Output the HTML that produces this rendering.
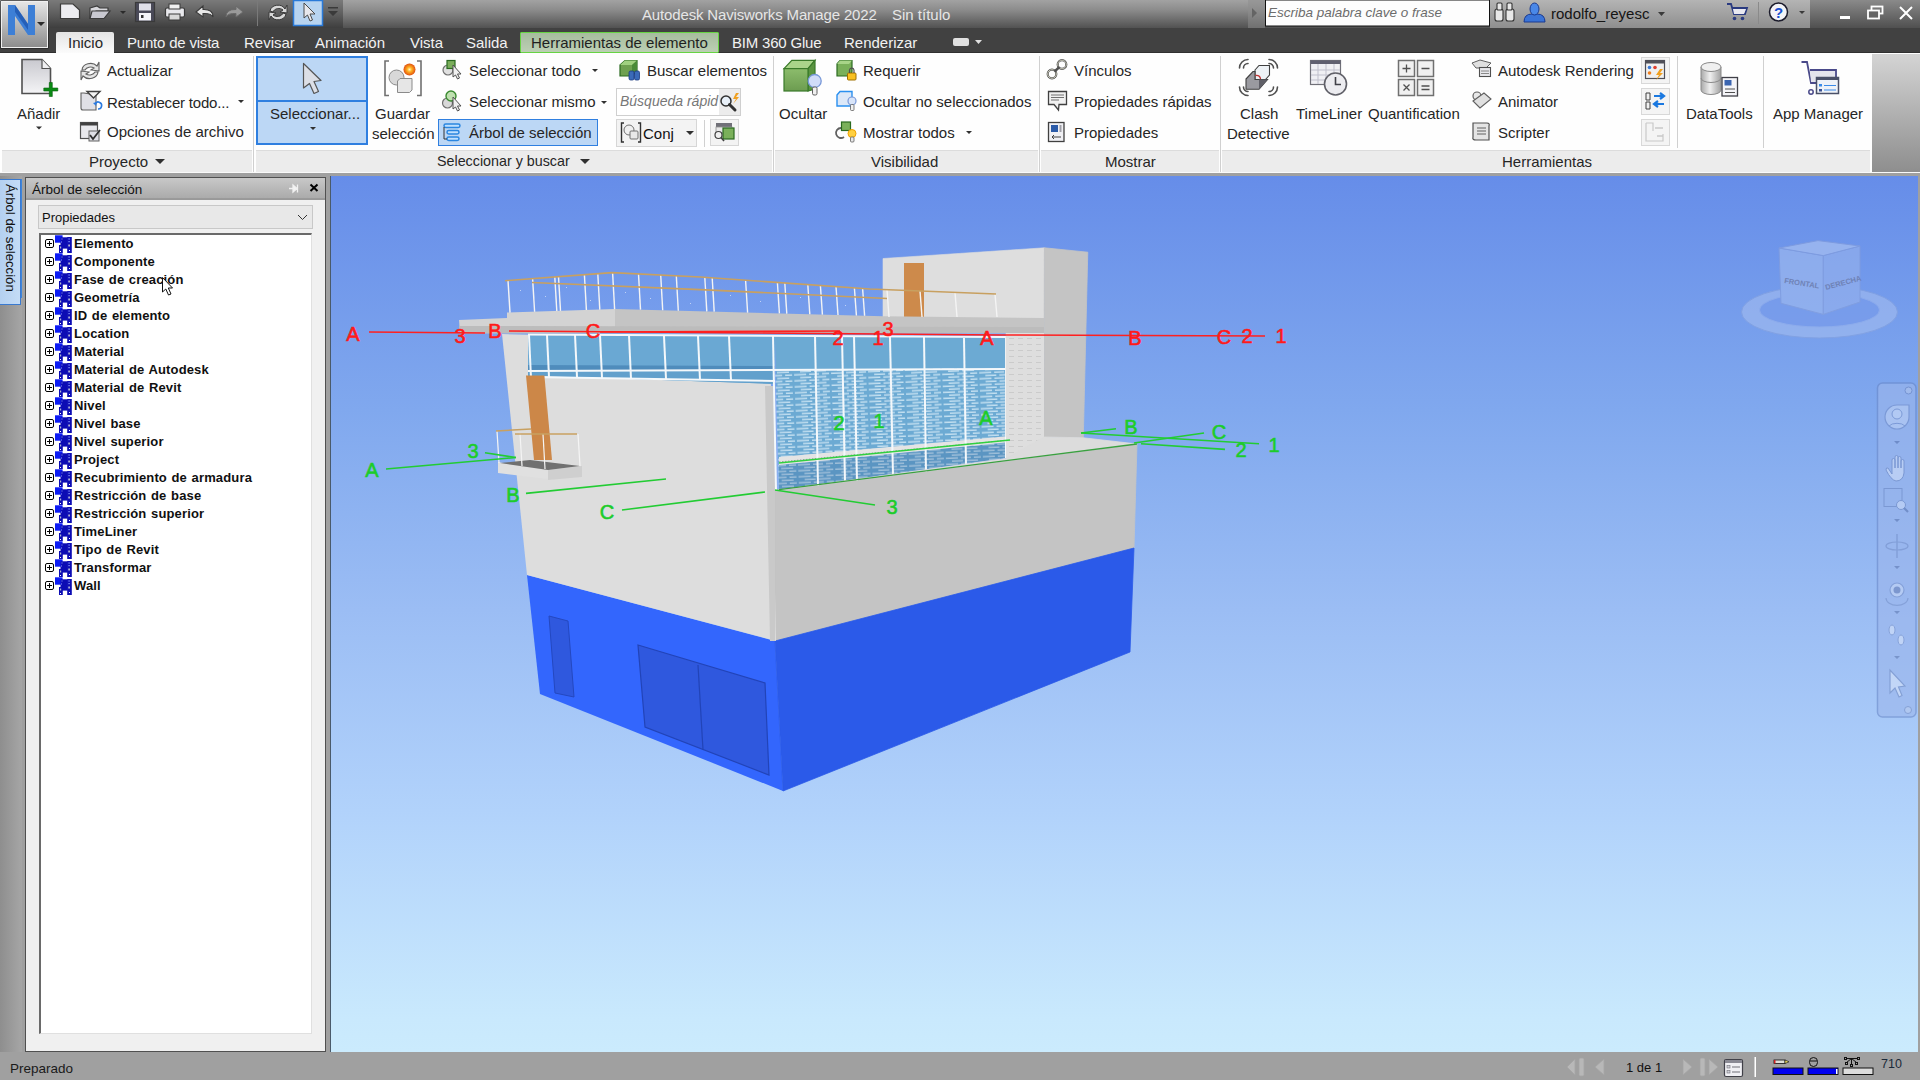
<!DOCTYPE html>
<html><head><meta charset="utf-8">
<style>
*{box-sizing:border-box;margin:0;padding:0}
html,body{width:1920px;height:1080px;overflow:hidden;background:#a0a0a0;font-family:"Liberation Sans",sans-serif;position:relative}
.a{position:absolute}
.t{position:absolute;white-space:nowrap;font-size:15px;line-height:15px;color:#262626}
.tw{position:absolute;white-space:nowrap;font-size:15px;line-height:15px;color:#f2f2f2}
svg{position:absolute;overflow:visible}
#title{left:0;top:0;width:1920px;height:28px;background:linear-gradient(#a2a2a2,#8c8c8c 35%,#525252 100%)}
#tabs{left:0;top:28px;width:1920px;height:25px;background:#414141;border-bottom:1px solid #303030}
#ribbon{left:0;top:53px;width:1920px;height:119px;background:#fefefe}
.lbl{position:absolute;top:150px;height:22px;background:#ececec;border-top:1px solid #dcdcdc}
.psep{position:absolute;top:56px;width:1px;height:116px;background:#d0d0d0}
#vp{left:331px;top:176px;width:1589px;height:876px;background:linear-gradient(#668de9 0%,#80a8ee 26.7%,#9bbdf4 49.5%,#b1d2fb 72.4%,#c9e9fd 96.3%,#cbebfd 100%)}
.tree{font-weight:bold;font-size:13px;line-height:13px;color:#101010;letter-spacing:0.15px;word-spacing:0.8px}
</style></head><body>

<!-- TITLE BAR -->
<div id="title" class="a"></div>
<div id="tabs" class="a"></div>
<div id="ribbon" class="a"></div>


<!-- Title text -->
<div class="tw" style="left:642px;top:7px;font-size:15px;color:#e6e6e6;letter-spacing:-0.15px">Autodesk Navisworks Manage 2022</div>
<div class="tw" style="left:892px;top:7px;color:#e6e6e6">Sin título</div>

<!-- Tabs -->
<div class="a" style="left:56px;top:32px;width:58px;height:21px;background:linear-gradient(#e4e4e4,#fbfbfb);border-radius:2px 2px 0 0"></div>
<div class="t" style="left:68px;top:35px">Inicio</div>
<div class="tw" style="left:127px;top:35px;letter-spacing:-0.2px">Punto de vista</div>
<div class="tw" style="left:244px;top:35px">Revisar</div>
<div class="tw" style="left:315px;top:35px">Animación</div>
<div class="tw" style="left:410px;top:35px">Vista</div>
<div class="tw" style="left:466px;top:35px">Salida</div>
<div class="a" style="left:519.5px;top:31.5px;width:199.5px;height:21px;background:linear-gradient(#a6bd9e,#bccfb4);border:1.5px solid #66d442;border-radius:1px"></div>
<div class="t" style="left:531px;top:35px;color:#1f1f1f">Herramientas de elemento</div>
<div class="tw" style="left:732px;top:35px;letter-spacing:-0.2px">BIM 360 Glue</div>
<div class="tw" style="left:844px;top:35px">Renderizar</div>

<!-- Ribbon panels -->
<div class="lbl" style="left:2px;width:250px"></div>
<div class="lbl" style="left:256px;width:516px"></div>
<div class="lbl" style="left:775px;width:263px"></div>
<div class="lbl" style="left:1041px;width:178px"></div>
<div class="lbl" style="left:1222px;width:648px"></div>
<div class="psep" style="left:253px"></div>
<div class="psep" style="left:773px"></div>
<div class="psep" style="left:1039px"></div>
<div class="psep" style="left:1220px"></div>
<div class="a" style="left:1872px;top:54px;width:48px;height:118px;background:linear-gradient(#d4d4d4,#8e8e8e)"></div>

<div class="t" style="left:89px;top:153.5px">Proyecto</div>
<div class="t" style="left:437px;top:153.5px;font-size:14.3px">Seleccionar y buscar</div>
<div class="t" style="left:871px;top:153.5px">Visibilidad</div>
<div class="t" style="left:1105px;top:153.5px">Mostrar</div>
<div class="t" style="left:1502px;top:153.5px">Herramientas</div>

<!-- Proyecto -->
<div class="t" style="left:17px;top:106px">Añadir</div>
<div class="t" style="left:107px;top:63px">Actualizar</div>
<div class="t" style="left:107px;top:95px;letter-spacing:-0.2px">Restablecer todo...</div>
<div class="t" style="left:107px;top:124px">Opciones de archivo</div>

<!-- Seleccionar y buscar -->
<div class="a" style="left:256px;top:56px;width:112px;height:89px;background:#bcd7f5;border:2px solid #2f7fe0"></div>
<div class="a" style="left:256px;top:100px;width:112px;height:2px;background:#2f7fe0"></div>
<div class="t" style="left:270px;top:106px">Seleccionar...</div>
<div class="t" style="left:375px;top:106px">Guardar</div>
<div class="t" style="left:372px;top:126px">selección</div>
<div class="t" style="left:469px;top:63px">Seleccionar todo</div>
<div class="t" style="left:469px;top:94px">Seleccionar mismo</div>
<div class="a" style="left:438px;top:119px;width:160px;height:27px;background:#bcd7f5;border:1px solid #2f7fe0"></div>
<div class="t" style="left:469px;top:125px">Árbol de selección</div>
<div class="t" style="left:647px;top:63px">Buscar elementos</div>
<div class="a" style="left:616px;top:88px;width:125px;height:28px;background:#fff;border:1px solid #cfcfcf"></div>
<div class="t" style="left:620px;top:94px;font-style:italic;color:#777;font-size:14px">Búsqueda rápid</div>
<div class="a" style="left:616px;top:119px;width:81px;height:28px;background:#f3f3f3;border:1px solid #d6d6d6"></div>
<div class="t" style="left:643px;top:126px;color:#111">Conj</div>
<div class="a" style="left:710px;top:119px;width:29px;height:27px;background:#f3f3f3;border:1px solid #d6d6d6"></div>

<!-- Visibilidad -->
<div class="t" style="left:779px;top:106px">Ocultar</div>
<div class="t" style="left:863px;top:63px">Requerir</div>
<div class="t" style="left:863px;top:94px">Ocultar no seleccionados</div>
<div class="t" style="left:863px;top:125px">Mostrar todos</div>

<!-- Mostrar -->
<div class="t" style="left:1074px;top:63px">Vínculos</div>
<div class="t" style="left:1074px;top:94px">Propiedades rápidas</div>
<div class="t" style="left:1074px;top:125px">Propiedades</div>

<!-- Herramientas -->
<div class="t" style="left:1240px;top:106px">Clash</div>
<div class="t" style="left:1227px;top:126px">Detective</div>
<div class="t" style="left:1296px;top:106px">TimeLiner</div>
<div class="t" style="left:1368px;top:106px">Quantification</div>
<div class="t" style="left:1498px;top:63px">Autodesk Rendering</div>
<div class="t" style="left:1498px;top:94px">Animator</div>
<div class="t" style="left:1498px;top:125px">Scripter</div>
<div class="psep" style="left:1677px;height:92px"></div>
<div class="psep" style="left:1763px;height:92px"></div>
<div class="t" style="left:1686px;top:106px">DataTools</div>
<div class="t" style="left:1773px;top:106px">App Manager</div>

<!--ICONS1-->
<svg style="left:0;top:0" width="1920" height="176" viewBox="0 0 1920 176">
<defs>
<linearGradient id="gDoc" x1="0" y1="0" x2="0" y2="1"><stop offset="0" stop-color="#c9c9cf"/><stop offset="1" stop-color="#f4f4f6"/></linearGradient>
<linearGradient id="gN" x1="0" y1="0" x2="0" y2="1"><stop offset="0" stop-color="#e6e6e6"/><stop offset="1" stop-color="#8c8c8c"/></linearGradient>
<linearGradient id="gCubeF" x1="0" y1="0" x2="0" y2="1"><stop offset="0" stop-color="#8cbc6c"/><stop offset="1" stop-color="#6c9c50"/></linearGradient>
<radialGradient id="gBurst"><stop offset="0" stop-color="#fff8c0"/><stop offset="0.4" stop-color="#ffb020"/><stop offset="1" stop-color="#e05010"/></radialGradient>
<linearGradient id="gDB" x1="0" y1="0" x2="1" y2="0"><stop offset="0" stop-color="#a8a8a8"/><stop offset="0.45" stop-color="#f0f0f0"/><stop offset="1" stop-color="#a0a0a0"/></linearGradient>
</defs>
<!-- QAT dark band -->
<linearGradient id="gQat" x1="0" y1="0" x2="0" y2="1"><stop offset="0" stop-color="#7a7a7a"/><stop offset="0.5" stop-color="#5e5e5e"/><stop offset="1" stop-color="#3e3e3e"/></linearGradient>
<linearGradient id="gCtl" x1="0" y1="0" x2="0" y2="1"><stop offset="0" stop-color="#8a8a8a"/><stop offset="1" stop-color="#505050"/></linearGradient>
<linearGradient id="gUsr" x1="0" y1="0" x2="0" y2="1"><stop offset="0" stop-color="#b4b4b4"/><stop offset="1" stop-color="#8e8e8e"/></linearGradient>
<rect x="49" y="0" width="294" height="28" fill="url(#gQat)"/>
<rect x="1490" y="0" width="320" height="28" fill="url(#gUsr)"/>
<rect x="1810" y="0" width="110" height="28" fill="url(#gCtl)"/>
<!-- App button N -->
<rect x="0.5" y="0.5" width="48" height="48" fill="#1a1a1a"/>
<rect x="1.5" y="1.5" width="46" height="46" fill="url(#gN)" stroke="#f0f0f0" stroke-width="1"/>
<path d="M8,35 L8,5 L15,5 L28,24 L28,5 L35,5 L35,35 L28,35 L15,16 L15,35 Z" fill="#3d7fd6"/>
<path d="M15,5 L28,24 L28,30 L15,12 Z" fill="#1f58b0" opacity="0.8"/>
<path d="M37,22 L45,22 L41,26 Z" fill="#2a2a2a"/>
<!-- QAT icons -->
<g stroke="#3a3a3a" stroke-width="1.2">
<path d="M60.5,4 L73,4 L79.5,10 L79.5,18.5 L60.5,18.5 Z" fill="#ececf0"/>
<path d="M90,8 L97,6 L100,8 L108,8 L108,11 L96,11 L91,18 L90,18 Z" fill="#d8d8dc"/>
<path d="M92,11 L110,11 L104,18.5 L90,18.5 Z" fill="#c8c8d0"/>
<rect x="135.5" y="2.5" width="19" height="19" fill="#4a4a58"/>
<rect x="165.5" y="8" width="19" height="9" rx="1.5" fill="#e8e8ec"/>
</g>
<path d="M120,11 L126,11 L123,14 Z" fill="#2a2a2a"/>
<rect x="139" y="3.5" width="12" height="7" fill="#e0e0e8"/><rect x="139" y="13" width="12" height="7.5" fill="#f4f4f8"/><rect x="141" y="15" width="2.5" height="3" fill="#333"/>
<rect x="169" y="4" width="11" height="5" fill="#f0f0f0" stroke="#3a3a3a" stroke-width="1"/><rect x="169" y="14" width="11" height="6" fill="#d8d8d8" stroke="#3a3a3a" stroke-width="1"/>
<path d="M196,12 L203,6 L203,9.5 Q213,9 213,17 Q211,13 203,13.5 L203,17 Z" fill="#e8e8e8" stroke="#3a3a3a" stroke-width="1.1"/>
<path d="M243,12 L236,6 L236,9.5 Q226,9 226,17 Q228,13 236,13.5 L236,17 Z" fill="#9a9a9a" stroke="#6a6a6a" stroke-width="1"/>
<rect x="257" y="0" width="1" height="26" fill="#7a7a7a"/>
<path d="M270,11 A8,7 0 0 1 285,9 L287,5 L287,13 L280,12 L283,10 A6,5 0 0 0 273,12 Z M286,14 A8,7 0 0 1 271,16 L269,20 L269,12 L276,13 L273,15 A6,5 0 0 0 283,13 Z" fill="#d8d8d8" stroke="#3a3a3a" stroke-width="1"/>
<rect x="293.5" y="0.5" width="29" height="25" fill="#b8d4f0" stroke="#2a7ad8" stroke-width="1.5"/>
<path d="M304,3 L304,18 L307.5,15 L310,21 L312.5,20 L310,14 L315,14 Z" fill="#e8e8ec" stroke="#4a4a4a" stroke-width="1"/>
<path d="M328,7 L338,7 L338,8.5 L328,8.5 Z M328,11 L338,11 L333,16 Z" fill="#3a3a3a"/>
<!-- title right arrow -->
<path d="M1252,8 L1257,13 L1252,18 Z" fill="#3a3a3a"/>
<rect x="1248" y="0" width="17" height="28" fill="#8e8e8e" opacity="0.5"/>
<!-- search box -->
<rect x="1265.5" y="0" width="224" height="26" fill="#fdfdfd" stroke="#111" stroke-width="1"/>
<!-- binoculars -->
<g fill="#e8e8e8" stroke="#333" stroke-width="1.1">
<rect x="1495" y="9" width="8" height="12" rx="2"/><rect x="1506" y="9" width="8" height="12" rx="2"/>
<rect x="1497" y="3" width="5" height="7" rx="1"/><rect x="1507" y="3" width="5" height="7" rx="1"/>
</g>
<!-- user -->
<path d="M1524,22 Q1524,14 1532,14 L1537,14 Q1545,14 1545,22 Z" fill="#3a74d8" stroke="#1a3a90" stroke-width="1"/>
<ellipse cx="1534.5" cy="9" rx="4.5" ry="6" fill="#4a88e8" stroke="#1a3a90" stroke-width="1"/>
<path d="M1658,12 L1665,12 L1661.5,16 Z" fill="#3a3a3a"/>
<!-- cart -->
<path d="M1727,4 L1731,4 L1734,14 L1745,14 L1747,8 L1732,8" fill="none" stroke="#2a3a80" stroke-width="1.8"/>
<path d="M1733,9 L1746,9 L1744,14 L1734,14 Z" fill="#e8e8f0"/>
<circle cx="1734.5" cy="18.5" r="1.8" fill="#2a3a80"/><circle cx="1742.5" cy="18.5" r="1.8" fill="#2a3a80"/>
<rect x="1758" y="2" width="1" height="22" fill="#8a8a8a"/>
<circle cx="1778.5" cy="12" r="9" fill="#f4f4f8" stroke="#1a1a2a" stroke-width="1.5"/>
<text x="1778.5" y="17.5" font-family="Liberation Sans" font-size="15" font-weight="bold" fill="#1a50d0" text-anchor="middle">?</text>
<path d="M1799,11 L1805,11 L1802,14 Z" fill="#3a3a3a"/>
<!-- window controls -->
<rect x="1840" y="16" width="10" height="3" fill="#fff"/>
<rect x="1871.5" y="6.5" width="11" height="7" fill="none" stroke="#fff" stroke-width="1.8"/>
<rect x="1868" y="10.5" width="11" height="8" fill="#666" stroke="#fff" stroke-width="1.8"/>
<path d="M1900,7 L1912,19 M1912,7 L1900,19" stroke="#fff" stroke-width="2"/>
<!-- tab row extra icon -->
<rect x="953" y="38" width="16" height="8" rx="2" fill="#e0e0e0"/><path d="M975,40 L982,40 L978.5,44 Z" fill="#e0e0e0"/>

<!-- ========== RIBBON ========== -->
<!-- Añadir -->
<path d="M22,59.5 L42,59.5 L50.5,68.5 L50.5,93.5 L22,93.5 Z" fill="url(#gDoc)" stroke="#505050" stroke-width="1.6"/>
<path d="M42,59.5 L42,68.5 L50.5,68.5" fill="#f0f0f2" stroke="#505050" stroke-width="1.2"/>
<path d="M49.3,82.5 h3 v5.5 h5.5 v3 h-5.5 v5.5 h-3 v-5.5 h-5.5 v-3 h5.5 Z" fill="#0a8a14" stroke="#06600c" stroke-width="0.6"/>
<path d="M36,126.5 L42,126.5 L39,129.5 Z" fill="#303030"/>
<!-- Actualizar -->
<path d="M82,70 A8.5,7 0 0 1 97,66 L99,62 L99,71 L91,70 L94,68 A6,5 0 0 0 85,70 Z M98,72 A8.5,7 0 0 1 83,76 L81,80 L81,71 L89,72 L86,74 A6,5 0 0 0 95,72 Z" fill="#e4e4e4" stroke="#606060" stroke-width="1.1"/>
<!-- Restablecer -->
<path d="M81,93 L81,108 Q81,110 83,110 L96,110 L96,95 L84,93 Z" fill="#e0e0e6" stroke="#606060" stroke-width="1.1"/>
<path d="M87,91.5 L100,91.5 L93.5,98 Z" fill="#f4f4f4" stroke="#404040" stroke-width="1.4"/>
<path d="M95,104 A3.5,3.5 0 1 1 98,109" fill="none" stroke="#2a7ae0" stroke-width="1.6"/><path d="M93,103 L97,102 L96,106 Z" fill="#2a7ae0"/>
<!-- Opciones -->
<rect x="80.5" y="122.5" width="17" height="16" fill="#e8e8ec" stroke="#505050" stroke-width="1.2"/>
<rect x="80.5" y="122.5" width="17" height="3" fill="#404040"/>
<rect x="89" y="131" width="10" height="10" fill="#e0e0e6" stroke="#606060" stroke-width="1"/>
<path d="M90,135 L93,139 L100,130" fill="none" stroke="#303030" stroke-width="1.8"/>
<path d="M238,100 L244,100 L241,103 Z" fill="#303030"/>
<path d="M155,159 L165,159 L160,164 Z" fill="#303030"/>
<!-- Seleccionar cursor -->
<path d="M303.5,63.5 L303.5,88 L309.5,83.5 L314,93.5 L318.5,91.5 L314,81.5 L321,80.5 Z" fill="#dcdfe6" stroke="#555" stroke-width="1.2" stroke-linejoin="round"/>
<path d="M310,127 L316,127 L313,130 Z" fill="#303030"/>
<!-- Guardar seleccion -->
<path d="M389,61 L385,61 L385,95.5 L389,95.5 M417,61 L421,61 L421,95.5 L417,95.5" fill="none" stroke="#707070" stroke-width="1.6"/>
<circle cx="396.5" cy="77.5" r="7.5" fill="#d8d8d8" stroke="#8a8a8a" stroke-width="1"/>
<path d="M397.5,81 L400,78.5 L412,78.5 L412,90 L409.5,92.5 L397.5,92.5 Z" fill="#e6e6e6" stroke="#8a8a8a" stroke-width="1"/>
<circle cx="409.5" cy="69.5" r="6" fill="url(#gBurst)"/>
<!-- Seleccionar todo / mismo -->
<circle cx="448" cy="70" r="5" fill="#e0e0e0" stroke="#707070" stroke-width="1.2"/>
<rect x="447" y="60.5" width="8" height="8" fill="#7cae5c" stroke="#2a6a20" stroke-width="1.2"/>
<path d="M453,65 L453,77 L455.5,75 L457.5,79 L459.5,78 L457.5,74 L461,74 Z" fill="#f0f0f0" stroke="#505050" stroke-width="1"/>
<path d="M592,69 L598,69 L595,72 Z" fill="#303030"/>
<circle cx="447.5" cy="103" r="5" fill="#d8d8d8" stroke="#707070" stroke-width="1.2"/>
<circle cx="451" cy="96" r="5" fill="#bfe0b0" stroke="#3a8a30" stroke-width="1.4"/>
<path d="M453,97 L453,109 L455.5,107 L457.5,111 L459.5,110 L457.5,106 L461,106 Z" fill="#f0f0f0" stroke="#505050" stroke-width="1"/>
<path d="M601,101 L607,101 L604,104 Z" fill="#303030"/>
<!-- Arbol icon -->
<g fill="#bfe0ff" stroke="#2a86e0" stroke-width="1.5">
<rect x="444" y="124" width="16" height="3.5" rx="1.7"/><rect x="447" y="130.5" width="12" height="3.5" rx="1.7"/><rect x="447" y="137" width="12" height="3.5" rx="1.7"/>
</g>
<path d="M444,127 L444,139 L447,139" fill="none" stroke="#333" stroke-width="1"/>
<!-- Buscar elementos -->
<path d="M620,65 L625,60.5 L637,60.5 L637,71 L632,76 L620,76 Z" fill="#6ea050" stroke="#2a6a20" stroke-width="1.2"/>
<path d="M620,65 L625,60.5 L637,60.5 L632,65 Z" fill="#a0d080"/>
<path d="M632,65 L637,60.5 L637,71 L632,76 Z" fill="#4a8a38"/>
<rect x="629" y="71" width="5" height="9" rx="1.5" fill="#3a6ab8" stroke="#1a3a80" stroke-width="0.8"/><rect x="634.5" y="71" width="5" height="9" rx="1.5" fill="#3a6ab8" stroke="#1a3a80" stroke-width="0.8"/>
<!-- search icon -->
<rect x="719" y="89" width="21" height="26" fill="#ececec"/>
<circle cx="726" cy="101" r="5" fill="#e8f0f8" stroke="#303030" stroke-width="1.5"/>
<path d="M729.5,104.5 L735,110" stroke="#303030" stroke-width="3" stroke-linecap="round"/>
<path d="M736,93 L733,99 L736,99 L733,104 L739,97 L736,97 L739,93 Z" fill="#f0a020"/>
<!-- Conj icon -->
<path d="M624,123 L621.5,123 L621.5,142 L624,142 M638,123 L640.5,123 L640.5,142 L638,142" fill="none" stroke="#303030" stroke-width="1.4"/>
<circle cx="629" cy="130" r="5" fill="#f0f0f0" stroke="#707070" stroke-width="1"/>
<rect x="630" y="131" width="8" height="8" rx="1" fill="#e8e8e8" stroke="#707070" stroke-width="1"/>
<path d="M686,131 L694,131 L690,135 Z" fill="#303030"/>
<rect x="704" y="120" width="1" height="27" fill="#d0d0d0"/>
<!-- right small icon -->
<rect x="716" y="123" width="16" height="4" fill="#707078"/><rect x="716" y="127" width="16" height="6" fill="#e8e8e8" stroke="#909090" stroke-width="0.8"/>
<rect x="723" y="128" width="11" height="11" fill="#7ab05a" stroke="#2a6a20" stroke-width="1.2"/>
<circle cx="718.5" cy="135" r="3.5" fill="#f0f0f0" stroke="#404040" stroke-width="1.2"/><path d="M721,137.5 L724,141" stroke="#404040" stroke-width="1.6"/>
<path d="M580,159 L590,159 L585,164 Z" fill="#303030"/>
<!-- Ocultar big cube -->
<path d="M784,68.6 L791.8,60.3 L815,60.3 L808,68.6 Z" fill="#aad48a" stroke="#3a7a2a" stroke-width="1.2"/>
<path d="M808,68.6 L815,60.3 L815,89 L808,91 Z" fill="#5a9440" stroke="#3a7a2a" stroke-width="1.2"/>
<rect x="784" y="68.6" width="24" height="22.4" fill="url(#gCubeF)" stroke="#3a7a2a" stroke-width="1.2"/>
<circle cx="814.7" cy="81" r="6.5" fill="#d0dcf8" stroke="#7898d8" stroke-width="1.3"/>
<rect x="812.5" y="87" width="4.5" height="8" rx="1.5" fill="#f0f0f0" stroke="#606060" stroke-width="1"/>
<!-- Requerir -->
<path d="M837,64 L840,60.5 L852,60.5 L852,72 L849,76 L837,76 Z" fill="#7ab05a" stroke="#2a6a20" stroke-width="1.2"/>
<path d="M837,64 L840,60.5 L852,60.5 L849,64 Z" fill="#a8d488"/>
<rect x="847.5" y="73" width="8.5" height="7" rx="1" fill="#f8c020" stroke="#a07000" stroke-width="1"/>
<path d="M849.5,73 L849.5,70 A2.3,2.3 0 0 1 854,70 L854,73" fill="none" stroke="#505050" stroke-width="1.2"/>
<!-- Ocultar no sel -->
<path d="M837,95 L840,91.5 L852,91.5 L852,106 L837,106 Z" fill="#dce8f8" stroke="#2a90f0" stroke-width="1.4"/>
<circle cx="852" cy="101" r="4" fill="#d8e4f8" stroke="#7898d8" stroke-width="1.2"/><rect x="850.5" y="104.5" width="3.5" height="6" rx="1" fill="#f0f0f0" stroke="#606060" stroke-width="0.8"/>
<!-- Mostrar todos -->
<path d="M844,137 A5,5 0 1 1 841,128" fill="none" stroke="#606060" stroke-width="1.8"/>
<rect x="841.5" y="122" width="9" height="8.5" fill="#7ab05a" stroke="#2a6a20" stroke-width="1.2"/>
<circle cx="852" cy="133.5" r="4" fill="#ffd040" stroke="#f0a000" stroke-width="1"/><rect x="850.5" y="137" width="3.5" height="5" rx="1" fill="#e8e8e8" stroke="#606060" stroke-width="0.8"/>
<path d="M966,131 L972,131 L969,134 Z" fill="#303030"/>
<!-- Vinculos -->
<g fill="none" stroke="#505050" stroke-width="2.2"><circle cx="1052" cy="74" r="4.3"/><circle cx="1062" cy="64.5" r="4.3"/></g>
<g fill="none" stroke="#c8c8b8" stroke-width="1"><circle cx="1052" cy="74" r="4.3"/><circle cx="1062" cy="64.5" r="4.3"/></g>
<path d="M1054.5,71.5 L1059.5,67" stroke="#505050" stroke-width="2.4"/>
<!-- Prop rapidas -->
<path d="M1048.5,91.5 L1066.5,91.5 L1066.5,104.5 L1059,104.5 L1058.5,110 L1054,104.5 L1048.5,104.5 Z" fill="#f0f0f0" stroke="#404040" stroke-width="1.3"/>
<path d="M1051,95 L1064,95 M1051,97.5 L1064,97.5 M1051,100 L1059,100" stroke="#707070" stroke-width="1"/>
<!-- Propiedades -->
<rect x="1048.5" y="122.5" width="15.5" height="19" fill="#f0f0f4" stroke="#404040" stroke-width="1.3"/>
<rect x="1051" y="125" width="7" height="7" fill="#2a5aa8"/>
<rect x="1059.5" y="125" width="2" height="7" fill="#a0a0a8"/>
<path d="M1052,137 L1061,137 M1052,137 L1054,135 M1052,137 L1054,139" stroke="#404040" stroke-width="1"/>
<!-- Clash detective -->
<g fill="none" stroke="#505050" stroke-width="1.6" stroke-linecap="round">
<path d="M1239.5,68 A8.5,8.5 0 0 1 1248,59.5"/><path d="M1243.5,68 A4.5,4.5 0 0 1 1248,63.5"/>
<path d="M1269,59.5 A8.5,8.5 0 0 1 1277.5,68"/><path d="M1269,63.5 A4.5,4.5 0 0 1 1273.5,68"/>
<path d="M1239.5,87 A8.5,8.5 0 0 0 1248,95.5"/><path d="M1243.5,87 A4.5,4.5 0 0 0 1248,91.5"/>
<path d="M1269,95.5 A8.5,8.5 0 0 0 1277.5,87"/><path d="M1269,91.5 A4.5,4.5 0 0 0 1273.5,87"/>
</g>
<path d="M1255,70 L1259,65.5 L1269.5,65.5 L1269.5,75 L1265.5,79.5 L1255,79.5 Z" fill="#eef2f6" stroke="#404040" stroke-width="1.1"/>
<path d="M1246,79 L1253,71.5 L1255,71.5 L1255,79.5 L1267.5,79.5 L1259,89.3 L1246,89.3 Z" fill="#9a9aa0" stroke="#404040" stroke-width="1.1"/>
<path d="M1259,79.5 L1267.5,79.5 L1259,89.3 Z" fill="#606068"/>
<path d="M1255.5,75.5 Q1260,75 1260.5,79" fill="none" stroke="#c03030" stroke-width="1.3"/>
<!-- TimeLiner -->
<rect x="1310.5" y="60.5" width="30" height="24" fill="#f0f0f4" stroke="#707078" stroke-width="1.2"/>
<rect x="1310.5" y="60.5" width="30" height="3.5" fill="#606070"/>
<g stroke="#c0c0cc" stroke-width="1"><path d="M1311,70 H1340 M1311,75 H1340 M1311,80 H1340 M1318,64 V84 M1326,64 V84 M1334,64 V84"/></g>
<circle cx="1335.5" cy="84" r="11" fill="#ececf0" stroke="#606068" stroke-width="1.6"/>
<path d="M1335.5,77 L1335.5,84.5 L1341,84.5" fill="none" stroke="#404048" stroke-width="1.6"/>
<!-- Quantification -->
<g fill="#f0f0f0" stroke="#707070" stroke-width="1.5">
<rect x="1398.5" y="60.5" width="16" height="16"/><rect x="1417.5" y="60.5" width="16" height="16"/>
<rect x="1398.5" y="79.5" width="16" height="16"/><rect x="1417.5" y="79.5" width="16" height="16"/>
</g>
<path d="M1402.5,68.5 H1410.5 M1406.5,64.5 V72.5 M1421.5,68.5 H1429.5 M1403.5,84.5 L1409.5,90.5 M1409.5,84.5 L1403.5,90.5 M1421.5,86 H1429.5 M1421.5,89.5 H1429.5" stroke="#505050" stroke-width="1.3"/>
<!-- Autodesk Rendering -->
<path d="M1472,63 L1480,60 L1491,63 L1486,68 L1476,68 Z" fill="#e0e0e0" stroke="#606060" stroke-width="1"/>
<rect x="1479.5" y="67.5" width="11" height="9" fill="#e8e8ec" stroke="#505050" stroke-width="1.1"/>
<path d="M1481,71 H1489 M1481,73.5 H1489" stroke="#707070" stroke-width="0.8"/>
<!-- Animator -->
<circle cx="1477" cy="96" r="4" fill="#e8e8e8" stroke="#606060" stroke-width="1.2"/>
<path d="M1473,101 L1484,93 L1491,99 L1480,108 Z" fill="#e0e0e0" stroke="#606060" stroke-width="1.1"/>
<!-- Scripter -->
<path d="M1473,123 L1487,123 Q1490,123 1489,126 L1489,140 L1476,140 Q1472,140 1473,137 Z" fill="#e4e4e4" stroke="#505050" stroke-width="1.2"/>
<path d="M1477,128 H1486 M1477,131 H1486 M1477,134 H1486" stroke="#606060" stroke-width="1"/>
<!-- small buttons -->
<g fill="#f4f4f4" stroke="#d8d8d8" stroke-width="1"><rect x="1641.5" y="57.5" width="28" height="26"/><rect x="1641.5" y="88.5" width="28" height="26"/><rect x="1641.5" y="119.5" width="28" height="26"/></g>
<rect x="1645.5" y="60.5" width="19" height="18" fill="#f0f0f0" stroke="#505058" stroke-width="1.2"/>
<rect x="1645.5" y="60.5" width="19" height="3" fill="#505058"/>
<circle cx="1649.5" cy="67.5" r="1.8" fill="#3a7ad8"/><circle cx="1655" cy="67.5" r="1.8" fill="#e04030"/><circle cx="1649.5" cy="73" r="1.8" fill="#f08020"/>
<path d="M1660,69 L1656,75 L1659,75 L1656,80 L1663,73 L1660,73 L1663,69 Z" fill="#f0a020"/>
<path d="M1646,93 L1650,93 L1650,100 L1646,100 Z M1646,102 L1650,102 L1650,109 L1646,109 Z" fill="#f0f0f0" stroke="#404040" stroke-width="1"/>
<path d="M1654,96 L1663,96 M1660,93 L1664,96 L1660,99 M1664,104 L1655,104 M1658,101 L1654,104 L1658,107" fill="none" stroke="#1a78e0" stroke-width="2.2"/>
<path d="M1646,123 L1653,123 L1653,131 M1646,123 L1646,141 L1663,141 L1663,134" fill="none" stroke="#c8c8c8" stroke-width="1.2"/>
<path d="M1655,128 L1663,128 M1657,136 L1663,136" stroke="#c8c8c8" stroke-width="1.5"/>
<!-- DataTools -->
<path d="M1701,67 L1701,90 A10,4.5 0 0 0 1721,90 L1721,67 Z" fill="url(#gDB)" stroke="#8a8a8a" stroke-width="1"/>
<ellipse cx="1711" cy="67" rx="10" ry="4.5" fill="#f0f0f0" stroke="#8a8a8a" stroke-width="1"/>
<path d="M1701,78 A10,4.5 0 0 0 1721,78" fill="none" stroke="#8a8a8a" stroke-width="1"/>
<rect x="1722" y="77.5" width="15.5" height="18.5" fill="#f4f4f8" stroke="#404048" stroke-width="1.3"/>
<rect x="1724.5" y="80" width="7" height="5.5" fill="#3a64b0"/>
<path d="M1725,89 H1735 M1725,92.5 H1735" stroke="#505050" stroke-width="1"/>
<!-- App manager -->
<path d="M1801.5,62 L1807,62 L1811,83 L1836,83 L1836,70 L1810,70" fill="none" stroke="#4a4a8a" stroke-width="1.8"/>
<path d="M1810,71 L1835,71 L1835,82 L1811,82 Z" fill="#e4e4ec"/>
<circle cx="1811" cy="92" r="2.2" fill="#fff" stroke="#4a4a8a" stroke-width="1.5"/>
<rect x="1816.5" y="77.5" width="22" height="16" fill="#eef2f8" stroke="#4a5068" stroke-width="1.5"/>
<rect x="1816.5" y="77.5" width="22" height="2.5" fill="#4a5068"/>
<rect x="1819" y="84" width="3" height="2.5" fill="#3a8ae8"/><rect x="1819" y="89" width="3" height="2.5" fill="#3a5090"/>
<path d="M1824,85.5 H1836 M1824,90 H1836" stroke="#3a8ae8" stroke-width="1.2"/>
</svg>

<!--/ICONS1-->
<div class="t" style="left:1268px;top:6px;font-size:13.5px;line-height:13.5px;font-style:italic;color:#6c6c6c">Escriba palabra clave o frase</div>
<div class="t" style="left:1551px;top:6px;color:#151515">rodolfo_reyesc</div>
<!-- gray band below ribbon -->
<div class="a" style="left:0;top:172px;width:1920px;height:4px;background:#a0a0a0;border-top:1px solid #fafafa"></div>

<!-- LEFT PANEL -->
<div class="a" style="left:0;top:176px;width:22px;height:876px;background:linear-gradient(90deg,#8e8e8e,#a6a6a6)"></div>
<div class="a" style="left:0;top:179px;width:22px;height:119px;background:#b9d1ee;border:2px solid #3d85dc;border-left:none"></div>
<div class="a" style="left:25px;top:177px;width:301px;height:875px;background:#f0f0f0;border:1px solid #505050"></div>
<div class="a" style="left:26px;top:178px;width:299px;height:22px;background:linear-gradient(#c8c8c8,#a8a8a8)"></div>
<div class="t" style="left:32px;top:182px;font-size:13.5px;color:#111">Árbol de selección</div>
<div class="a" style="left:38px;top:205px;width:275px;height:24px;background:#e8e8e8;border:1px solid #c8c8c8"></div>
<div class="t" style="left:42px;top:210px;font-size:13px;color:#111">Propiedades</div>
<div class="a" style="left:39px;top:233px;width:273px;height:801px;background:#fff;border-top:2px solid #6a6a6a;border-left:2px solid #6a6a6a;border-right:1px solid #e0e0e0;border-bottom:1px solid #e0e0e0"></div>

<!--TREE-->
<svg style="left:0;top:0" width="1920" height="1080" viewBox="0 0 1920 1080">
<defs><g id="ti">
<rect x="0.5" y="0.5" width="8" height="8" rx="1.5" fill="#fff" stroke="#000" stroke-width="1"/>
<line x1="2" y1="4.5" x2="7" y2="4.5" stroke="#000" stroke-width="1"/><line x1="4.5" y1="2" x2="4.5" y2="7" stroke="#000" stroke-width="1"/>
<rect x="10" y="-3.7" width="7.6" height="7.4" fill="#0d1cf5"/>
<rect x="15.5" y="-1.7" width="7.3" height="11.3" fill="#0c0cb4"/>
<rect x="14" y="6" width="3.8" height="8" fill="#0c0cb4"/>
<rect x="22.2" y="-2" width="4.6" height="16" fill="#0c0cb4"/>
<rect x="16.5" y="-0.5" width="1" height="1" fill="#8a9aff"/><rect x="16" y="2.5" width="1" height="1" fill="#8a9aff"/>
<rect x="15" y="7.5" width="1.2" height="2" fill="#b0b8d0"/><rect x="15" y="12" width="1" height="1" fill="#fff"/>
<rect x="23.3" y="-0.5" width="1.6" height="1" fill="#8a9aff"/><rect x="23.3" y="2.2" width="1.6" height="1" fill="#8a9aff"/><rect x="23.3" y="5.5" width="1.6" height="2" fill="#c0c4d8"/><rect x="24" y="11" width="1" height="1" fill="#fff"/>
</g></defs>
<use href="#ti" x="45" y="239"/>
<use href="#ti" x="45" y="257"/>
<use href="#ti" x="45" y="275"/>
<use href="#ti" x="45" y="293"/>
<use href="#ti" x="45" y="311"/>
<use href="#ti" x="45" y="329"/>
<use href="#ti" x="45" y="347"/>
<use href="#ti" x="45" y="365"/>
<use href="#ti" x="45" y="383"/>
<use href="#ti" x="45" y="401"/>
<use href="#ti" x="45" y="419"/>
<use href="#ti" x="45" y="437"/>
<use href="#ti" x="45" y="455"/>
<use href="#ti" x="45" y="473"/>
<use href="#ti" x="45" y="491"/>
<use href="#ti" x="45" y="509"/>
<use href="#ti" x="45" y="527"/>
<use href="#ti" x="45" y="545"/>
<use href="#ti" x="45" y="563"/>
<use href="#ti" x="45" y="581"/>
</svg>
<div class="t tree" style="left:74px;top:237px">Elemento</div>
<div class="t tree" style="left:74px;top:255px">Componente</div>
<div class="t tree" style="left:74px;top:273px">Fase de creación</div>
<div class="t tree" style="left:74px;top:291px">Geometría</div>
<div class="t tree" style="left:74px;top:309px">ID de elemento</div>
<div class="t tree" style="left:74px;top:327px">Location</div>
<div class="t tree" style="left:74px;top:345px">Material</div>
<div class="t tree" style="left:74px;top:363px">Material de Autodesk</div>
<div class="t tree" style="left:74px;top:381px">Material de Revit</div>
<div class="t tree" style="left:74px;top:399px">Nivel</div>
<div class="t tree" style="left:74px;top:417px">Nivel base</div>
<div class="t tree" style="left:74px;top:435px">Nivel superior</div>
<div class="t tree" style="left:74px;top:453px">Project</div>
<div class="t tree" style="left:74px;top:471px">Recubrimiento de armadura</div>
<div class="t tree" style="left:74px;top:489px">Restricción de base</div>
<div class="t tree" style="left:74px;top:507px">Restricción superior</div>
<div class="t tree" style="left:74px;top:525px">TimeLiner</div>
<div class="t tree" style="left:74px;top:543px">Tipo de Revit</div>
<div class="t tree" style="left:74px;top:561px">Transformar</div>
<div class="t tree" style="left:74px;top:579px">Wall</div>
<!--/TREE-->
<!-- VIEWPORT -->
<div id="vp" class="a"></div>
<div class="a" style="left:330px;top:176px;width:1px;height:876px;background:#4a5a6a"></div>
<!--BUILDING-->
<svg style="left:331px;top:176px" width="1589" height="876" viewBox="331 176 1589 876">
<defs>
<pattern id="blinds" width="37" height="6" patternUnits="userSpaceOnUse" patternTransform="rotate(-2.5)">
<rect x="0" y="0.6" width="12" height="1.2" fill="#e6f4fc" opacity="0.9"/><rect x="15" y="0.6" width="10" height="1.2" fill="#e6f4fc" opacity="0.85"/><rect x="28" y="0.6" width="7" height="1.2" fill="#e6f4fc" opacity="0.88"/>
<rect x="6" y="3.6" width="11" height="1.2" fill="#e6f4fc" opacity="0.88"/><rect x="20" y="3.6" width="12" height="1.2" fill="#e6f4fc" opacity="0.85"/>
</pattern>
<pattern id="perf" width="9" height="6" patternUnits="userSpaceOnUse">
<rect x="1" y="2" width="5" height="1" fill="#b0b0b0" opacity="0.4"/>
</pattern>
</defs>
<!-- lower block right face -->
<polygon points="775,490 1137,444 1134,548 775,641" fill="#c4c4c4" stroke="#c4c4c4" stroke-width="0.8"/>
<!-- terrace floor -->

<!-- blue base -->
<polygon points="527,575 775,641 783,791 540,694" fill="#3366fd"/>
<polygon points="775,641 1134,548 1130,652 783,791" fill="#2b5ae9" stroke="#2b5ae9" stroke-width="0.8"/>
<polygon points="549,616 568,621 574,697 555,693" fill="#2f58de" stroke="#2448c0" stroke-width="1"/>
<polygon points="638,645 765,683 769,775 645,727" fill="#2f58de" stroke="#2244b8" stroke-width="1.2"/>
<line x1="698" y1="665" x2="703" y2="750" stroke="#2244b8" stroke-width="1.2"/>
<!-- left face -->
<polygon points="502,334 770,340 776,641 527,575" fill="#dddddd"/>
<polygon points="765,386 775,386 775,641 770,641" fill="#c9c9c9"/>
<!-- glass recess -->
<polygon points="775,336 1006,338 1006,458 779,490" fill="#6caad3"/>
<polygon points="775,370 1006,368 1006,458 779,490" fill="url(#blinds)"/>
<polygon points="779,465 1010,442 1006,458 779,490" fill="#1f4f88" opacity="0.22"/>
<polygon points="779,457 1010,436 1010,442 779,465" fill="#e4e4e4"/>
<line x1="779" y1="462" x2="1010" y2="440" stroke="#9a9a9a" stroke-width="1" stroke-dasharray="1.5 1.5"/>
<!-- window strip -->
<polygon points="528,335 775,336 775,384 545,376 528,378" fill="#6aa8d3"/>
<polygon points="528,365 775,366 775,371 528,371" fill="#4f8cbc"/><polygon points="528,371 775,371 775,384 545,376 528,378" fill="#62a0cc"/>
<g stroke="#f4f8fb" stroke-width="2">
<line x1="529" y1="335" x2="531" y2="378"/><line x1="547" y1="335" x2="549" y2="377"/>
<line x1="575" y1="335" x2="577" y2="377"/><line x1="600" y1="335" x2="602" y2="378"/>
<line x1="629" y1="335" x2="631" y2="379"/><line x1="664" y1="336" x2="666" y2="379"/>
<line x1="698" y1="336" x2="700" y2="380"/><line x1="729" y1="336" x2="731" y2="381"/>
<line x1="773" y1="336" x2="776" y2="490"/><line x1="815" y1="336" x2="818" y2="486"/>
<line x1="842" y1="336" x2="845" y2="482"/><line x1="854" y1="336" x2="857" y2="481"/>
<line x1="890" y1="337" x2="893" y2="476"/><line x1="924" y1="337" x2="926" y2="472"/>
<line x1="964" y1="338" x2="966" y2="466"/><line x1="1006" y1="338" x2="1006" y2="458"/>
<line x1="528" y1="371" x2="1006" y2="369"/><line x1="528" y1="334.5" x2="1006" y2="337"/><line x1="530" y1="377" x2="775" y2="381"/>
</g>
<!-- perforated wall -->

<!-- tower -->
<polygon points="883,258.5 1044.4,247.8 1044,437 1006,437 1006,333 883,333" fill="#dedede" stroke="#dedede" stroke-width="0.6"/>
<polygon points="1044.4,247.8 1087.8,252.2 1083.3,437.8 1044,437" fill="#c4c4c4" stroke="#c4c4c4" stroke-width="0.8"/>
<polygon points="1006,333 1044,333 1044,438 1006,459" fill="#dedede"/>
<polygon points="1006,333 1044,333 1044,438 1006,459" fill="url(#perf)"/>
<polygon points="779,490 1137,444 1083.3,437.8 1044,437 1006,458.5" fill="#dcdcdc" stroke="#dcdcdc" stroke-width="0.8"/>
<polygon points="904,263 924,263 924,317 904,317" fill="#cd8a4b"/>
<!-- roof slab -->
<polygon points="459,320 507,318 507,312.6 615,309 615,333 460,333.3" fill="#d3d3d3"/>
<polygon points="615,309 883,316.3 1044,318 1044,333 615,333" fill="#c4c4c4"/>
<polygon points="459,326 1044,327 1044,333 460,333.3" fill="#bcbcbc"/>
<!-- roof railing -->
<g stroke="#f4f4f4" stroke-width="1.4">
<line x1="508" y1="280.5" x2="510.0" y2="312.6"/>
<line x1="532.6" y1="278.6" x2="534.6" y2="311.7"/>
<line x1="554.8" y1="276.9" x2="556.8" y2="311.0"/>
<line x1="558.5" y1="276.6" x2="560.5" y2="310.9"/>
<line x1="584.4" y1="274.7" x2="586.4" y2="310.0"/>
<line x1="597.8" y1="273.7" x2="599.8" y2="309.6"/>
<line x1="612.6" y1="272.6" x2="614.6" y2="309.1"/>
<line x1="638.5" y1="273.9" x2="640.5" y2="309.6"/>
<line x1="660.7" y1="275.0" x2="662.7" y2="310.2"/>
<line x1="676.3" y1="275.8" x2="678.3" y2="310.7"/>
<line x1="704.8" y1="277.3" x2="706.8" y2="311.4"/>
<line x1="712.2" y1="277.9" x2="714.2" y2="311.6"/>
<line x1="745.6" y1="280.2" x2="747.6" y2="312.6"/>
<line x1="777.4" y1="282.5" x2="779.4" y2="313.4"/>
<line x1="784.8" y1="283.0" x2="786.8" y2="313.6"/>
<line x1="807.8" y1="284.6" x2="809.8" y2="314.3"/>
<line x1="820.4" y1="285.5" x2="822.4" y2="314.6"/>
<line x1="836" y1="286.6" x2="838.0" y2="315.0"/>
<line x1="854.4" y1="287.9" x2="856.4" y2="315.5"/>
<line x1="862.6" y1="288.5" x2="864.6" y2="315.7"/>
<line x1="887" y1="289.7" x2="889.0" y2="317.0"/>
<line x1="920" y1="291.0" x2="922.0" y2="317.0"/>
<line x1="955" y1="292.4" x2="957.0" y2="317.0"/>
<line x1="995" y1="294.0" x2="997.0" y2="317.0"/>
</g>
<g stroke="#c8a060" stroke-width="1.6" fill="none">
<polyline points="505,280.7 612,272.6 700,277 870,289 996,294"/>
<polyline points="532,282.5 700,289.6 887,298.5"/>
</g>
<g fill="#ffffff" opacity="0.55">
<rect x="520" y="290" width="1" height="1"/><rect x="545" y="296" width="1" height="1"/><rect x="566" y="287" width="1" height="1"/><rect x="590" y="300" width="1" height="1"/><rect x="625" y="292" width="1" height="1"/><rect x="650" y="298" width="1" height="1"/><rect x="690" y="303" width="1" height="1"/><rect x="730" y="295" width="1" height="1"/><rect x="760" y="301" width="1" height="1"/><rect x="800" y="297" width="1" height="1"/><rect x="845" y="305" width="1" height="1"/>
</g>
<!-- left balcony -->
<polygon points="526,375.5 544.4,375.5 552,460 534,460" fill="#cc8748"/>
<polygon points="498,462 548,470 548,479 498,473" fill="#e0e0e0"/>
<polygon points="548,470 582,466 582,477 548,480" fill="#cfcfcf"/>
<polygon points="500,463 530,460 580,466 548,470" fill="#707070"/>
<g stroke="#f4f4f4" stroke-width="1.2">
<line x1="497" y1="431" x2="499" y2="463"/><line x1="520" y1="433" x2="522" y2="466"/>
<line x1="543" y1="434" x2="545" y2="469"/><line x1="578" y1="434" x2="580" y2="466"/>
</g>
<g stroke="#c8a060" stroke-width="1.5"><line x1="496" y1="431" x2="531" y2="429"/><line x1="515" y1="434" x2="577" y2="434"/></g>
<!-- red grid -->
<g stroke="#ff2020" stroke-width="1.6" fill="none">
<line x1="369" y1="332" x2="485" y2="333"/>
<polyline points="509,331 760,333 1000,335 1265,336"/>
<line x1="600" y1="332" x2="840" y2="331"/>
</g>
<g fill="#ff1a1a" stroke="#ff1a1a" stroke-width="0.6" font-family="Liberation Sans" font-size="20" text-anchor="middle">
<text x="353" y="341">A</text><text x="460" y="343">3</text><text x="495" y="338">B</text><text x="593" y="338">C</text>
<text x="838" y="345">2</text><text x="878" y="345">1</text><text x="888" y="336">3</text><text x="987" y="345">A</text>
<text x="1135" y="345">B</text><text x="1224" y="344">C</text><text x="1247" y="343">2</text><text x="1281" y="343">1</text>
</g>
<!-- green grid -->
<g stroke="#22cc33" stroke-width="1.6" fill="none">
<line x1="386" y1="469" x2="516" y2="457.5"/><line x1="485" y1="452.8" x2="516" y2="457.5"/>
<line x1="526" y1="493.4" x2="666" y2="479"/>
<line x1="622" y1="510" x2="765" y2="492"/>
<line x1="775" y1="490" x2="875" y2="505"/>
<line x1="779" y1="489.6" x2="1137" y2="444" stroke="#3aa040" stroke-width="1.3"/>
<line x1="779" y1="463" x2="1010" y2="440" stroke="#30d040" stroke-width="1.3"/>
<line x1="1081" y1="433" x2="1116" y2="428.8"/>
<line x1="1081" y1="433" x2="1259" y2="443.75"/>
<line x1="1134" y1="443" x2="1204" y2="433"/>
<line x1="1141" y1="443.75" x2="1225" y2="449.4"/>
</g>
<g fill="#1ccc2a" stroke="#1ccc2a" stroke-width="0.6" font-family="Liberation Sans" font-size="20" text-anchor="middle">
<text x="372" y="477">A</text><text x="473" y="458">3</text><text x="513" y="502">B</text><text x="607" y="519">C</text>
<text x="892" y="514">3</text><text x="839" y="430">2</text><text x="879" y="428">1</text><text x="986" y="425">A</text>
<text x="1131" y="434">B</text><text x="1219" y="439">C</text><text x="1241" y="457">2</text><text x="1274" y="452">1</text>
</g>
</svg>

<!--/BUILDING-->

<!--EXTRAS-->
<div class="a" style="left:0;top:178.5px;width:21px;height:126px;background:linear-gradient(90deg,#b4d0f0,#c4dcf6);border:1.5px solid #3a7ad0;border-left:none"></div>
<div class="t" style="left:16.5px;top:184px;font-size:13.2px;line-height:13.2px;color:#111;transform:rotate(90deg);transform-origin:0 0">Árbol de selección</div>
<svg style="left:0;top:0" width="1920" height="1080" viewBox="0 0 1920 1080">
<!-- pin & close -->
<path d="M289,188.5 L293,188.5 M293,185 L297,188.5 L293,192 Z M297.5,184.5 L297.5,192.5" fill="#f4f4f4" stroke="#f0f0f0" stroke-width="1.3"/>
<path d="M310.5,184.5 L317.5,191 M317.5,184.5 L310.5,191" stroke="#000" stroke-width="2"/>
<rect x="26" y="198.5" width="299" height="1" fill="#8a8a8a"/>
<!-- dropdown chevron -->
<path d="M298,215 L302.5,219.5 L307,215" fill="none" stroke="#333" stroke-width="1"/>
<!-- tree cursor -->
<path d="M162.5,277.5 L162.5,292 L165.8,289 L168.5,295 L171,294 L168.3,288 L172.5,288 Z" fill="#fff" stroke="#111" stroke-width="1" stroke-linejoin="round"/>
<!-- ViewCube -->
<g opacity="0.55">
<ellipse cx="1819.5" cy="312" rx="78" ry="26" fill="#a8c0f0" stroke="#8aa4dc" stroke-width="1"/>
<ellipse cx="1819.5" cy="310" rx="60" ry="17" fill="#7a9ceb" stroke="#a0b8ec" stroke-width="1"/>
<polygon points="1779,248 1823.3,255.6 1823.3,314.4 1781,303.3" fill="#a6bff0" stroke="#8aa0d8" stroke-width="1"/>
<polygon points="1823.3,255.6 1860,246 1860,302 1823.3,314.4" fill="#9cb6ee" stroke="#8aa0d8" stroke-width="1"/>
<polygon points="1779,248 1818,240.6 1860,246 1823.3,255.6" fill="#b8ccf4" stroke="#8aa0d8" stroke-width="1"/>
</g>
<g fill="#6878a8" font-family="Liberation Sans" font-size="7.5" font-weight="bold" opacity="0.8">
<text x="1784" y="283" transform="rotate(9 1784 283)">FRONTAL</text>
<text x="1826" y="290" transform="rotate(-15 1826 290)">DERECHA</text>
</g>
<!-- Nav bar -->
<g opacity="0.6">
<rect x="1877.5" y="383" width="38.5" height="334" rx="5" fill="#9cb6ec" stroke="#6a88c8" stroke-width="1.5"/>
<circle cx="1908.5" cy="390.5" r="3.5" fill="#b8c8ec" stroke="#7088c0" stroke-width="1"/>
<circle cx="1897" cy="719" r="3.5" fill="#b8c8ec" stroke="#7088c0" stroke-width="1" transform="translate(11 -9)"/>
<path d="M1885,417 A12,12 0 0 1 1897,405 L1909,405 L1909,417 A12,12 0 0 1 1897,429 A12,12 0 0 1 1885,417 Z" fill="#c4d4f4" stroke="#7890c8" stroke-width="1.2"/>
<circle cx="1897" cy="414" r="5" fill="#d4e0f8" stroke="#7890c8" stroke-width="1"/>
<path d="M1889,426 A9,5 0 0 1 1905,426" fill="none" stroke="#7890c8" stroke-width="1"/>
<path d="M1894,441 L1900,441 L1897,444 Z M1894,519 L1900,519 L1897,522 Z M1894,566 L1900,566 L1897,569 Z M1894,611 L1900,611 L1897,614 Z M1894,656 L1900,656 L1897,659 Z" fill="#6078b0"/>
<path d="M1888,468 L1892,474 L1892,460 A1.5,1.5 0 0 1 1895,460 L1895,468 L1895,457 A1.5,1.5 0 0 1 1898,457 L1898,468 L1898,458 A1.5,1.5 0 0 1 1901,458 L1901,468 L1901,461 A1.5,1.5 0 0 1 1904,461 L1904,473 Q1903,481 1896,481 Q1891,480 1886,470 Q1886,467 1888,468 Z" fill="#d8e2f8" stroke="#7088c0" stroke-width="1"/>
<rect x="1884" y="488.5" width="18" height="18" fill="none" stroke="#7088c0" stroke-width="1"/>
<circle cx="1901" cy="505" r="4.5" fill="#d0dcf6" stroke="#7088c0" stroke-width="1"/><path d="M1904,508 L1908,512" stroke="#6078b0" stroke-width="2.2"/>
<ellipse cx="1897" cy="546" rx="11" ry="4" fill="none" stroke="#7890c8" stroke-width="1.2"/>
<path d="M1897,534 L1897,558" stroke="#7890c8" stroke-width="1.5"/>
<circle cx="1897" cy="590" r="7" fill="#c8d6f4" stroke="#7890c8" stroke-width="1.2"/><circle cx="1897" cy="590" r="3.5" fill="#6a80b8"/>
<path d="M1886,598 A9,6 0 0 0 1908,598" fill="none" stroke="#7890c8" stroke-width="1.2"/>
<ellipse cx="1892" cy="630" rx="3" ry="5" fill="#d8e2f8" stroke="#7890c8" stroke-width="1"/><ellipse cx="1901" cy="640" rx="3" ry="5" fill="#d8e2f8" stroke="#7890c8" stroke-width="1"/>
<path d="M1890,670 L1890,693 L1895,688 L1899,697 L1902,695.5 L1898.5,687 L1905,686 Z" fill="#d8e2f8" stroke="#7088c0" stroke-width="1.2"/>
</g>
<!-- viewport right edge -->
<rect x="1918" y="176" width="2" height="876" fill="#a0a0a0"/>
<!-- status bar icons -->
<g fill="#b8b8b8" stroke="#a4a4a4" stroke-width="0.8">
<path d="M1575,1059 L1567,1067 L1575,1075 Z"/><rect x="1579" y="1058" width="5" height="18" rx="1.5"/>
<path d="M1604,1059 L1595,1067 L1604,1075 Z"/>
<path d="M1683,1059 L1692,1067 L1683,1075 Z"/><rect x="1700" y="1058" width="5" height="18" rx="1.5"/>
<path d="M1709,1059 L1718,1067 L1709,1075 Z"/>
</g>
<rect x="1724.5" y="1059.5" width="18" height="17" rx="1.5" fill="#f0f0f4" stroke="#404048" stroke-width="1.2"/>
<rect x="1725" y="1060" width="17" height="3" fill="#8a8a94"/>
<rect x="1727" y="1065.5" width="3" height="2.5" fill="#d0d0d8" stroke="#707078" stroke-width="0.6"/><rect x="1727" y="1070.5" width="3" height="2.5" fill="#d0d0d8" stroke="#707078" stroke-width="0.6"/>
<path d="M1732,1067 H1740 M1732,1072 H1740" stroke="#707078" stroke-width="1"/>
<rect x="1754.5" y="1057" width="1.5" height="20" fill="#fff"/>
<rect x="1774" y="1060" width="11" height="3.5" fill="#e0e0d8" stroke="#111" stroke-width="0.8"/><rect x="1774" y="1060" width="1.5" height="3.5" fill="#d02020"/><path d="M1785,1060 L1789,1061.8 L1785,1063.5 Z" fill="#f0e060" stroke="#111" stroke-width="0.6"/>
<rect x="1773" y="1068" width="30" height="6.5" fill="#0000f0" stroke="#111" stroke-width="1"/>
<rect x="1809.5" y="1057.5" width="8" height="9" rx="4" fill="none" stroke="#111" stroke-width="1"/><path d="M1810,1061 H1817" stroke="#111" stroke-width="1"/>
<rect x="1808" y="1068" width="30" height="6.5" fill="#0000f0" stroke="#111" stroke-width="1"/><rect x="1836" y="1069" width="1.5" height="5" fill="#fff"/>
<g fill="none" stroke="#111" stroke-width="1"><rect x="1844.5" y="1057.5" width="2" height="2"/><rect x="1857.5" y="1057.5" width="2" height="2"/><rect x="1845.5" y="1062.5" width="2" height="2"/><rect x="1855.5" y="1062.5" width="2" height="2"/><rect x="1850.5" y="1064.5" width="2" height="2"/><path d="M1846.5,1058.5 H1857.5 M1851.5,1058.5 V1064.5 M1851.5,1058.5 L1846.5,1062.5 M1851.5,1058.5 L1856.5,1062.5"/></g>
<rect x="1843" y="1068" width="30" height="6.5" fill="#dcdcdc" stroke="#111" stroke-width="1"/>
</svg>
<!--/EXTRAS-->

<!-- STATUS BAR -->
<div class="t" style="left:10px;top:1061px;font-size:13.5px;color:#1a1a1a">Preparado</div>
<div class="t" style="left:1626px;top:1061px;font-size:13px;line-height:13px;color:#111">1 de 1</div>
<div class="t" style="left:1881px;top:1057.5px;font-size:12.5px;line-height:12.5px;color:#1a2a3a">710</div>

</body></html>
